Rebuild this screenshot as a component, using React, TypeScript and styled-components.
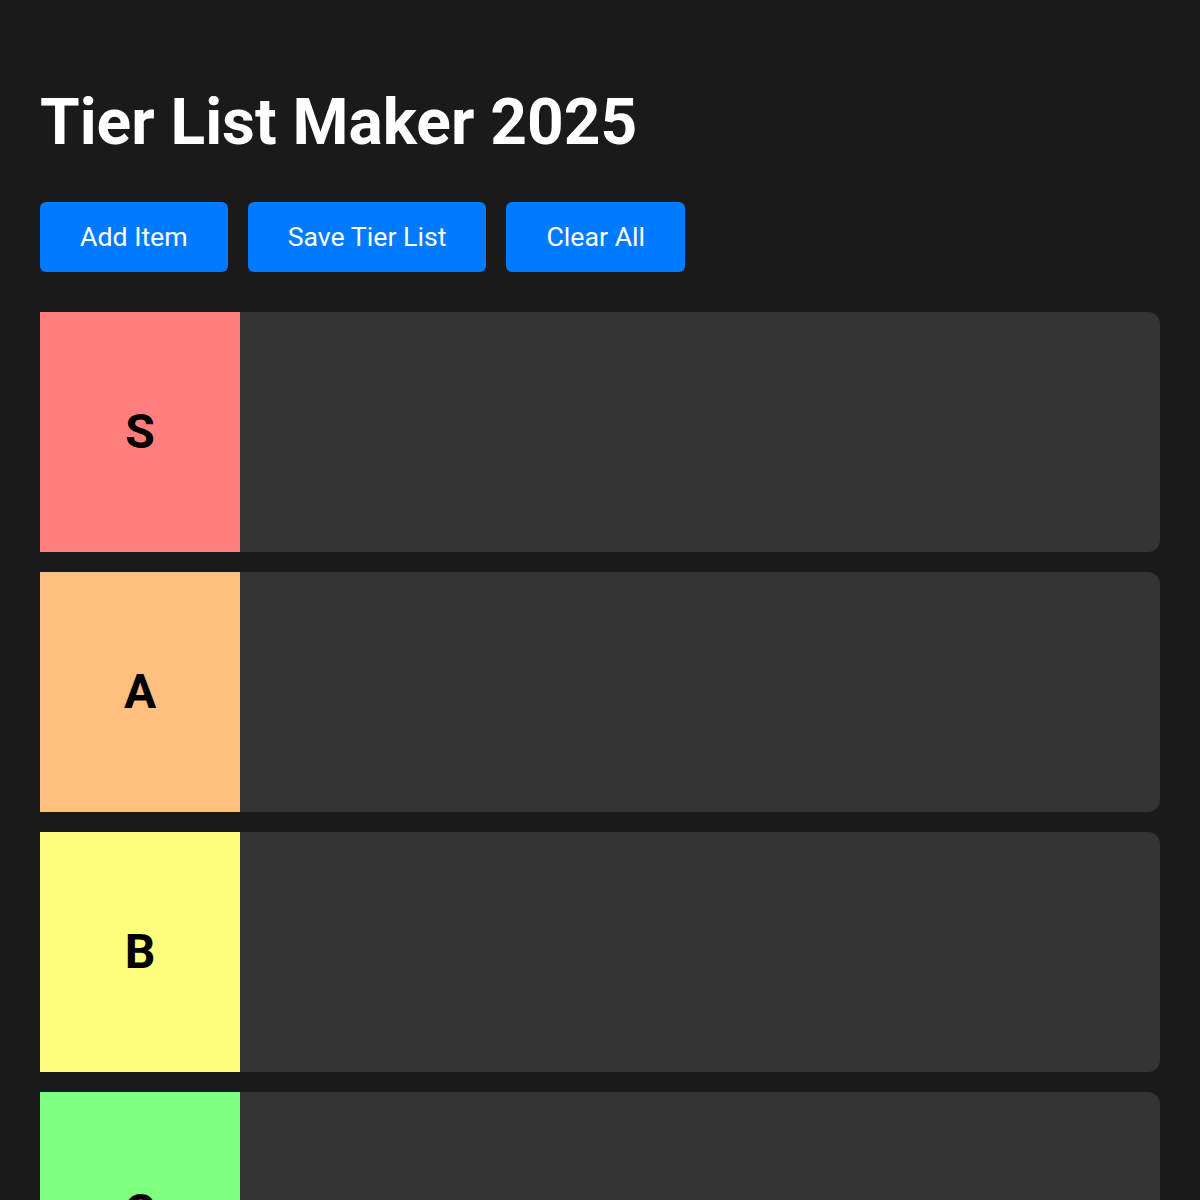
import React from "react";
import styled, { createGlobalStyle } from "styled-components";

const GlobalStyle = createGlobalStyle`
  body {
    margin: 0;
    background: #1a1a1a;
    font-family: Roboto, "Liberation Sans", sans-serif;
    color: #fff;
  }
`;

const tiers = [
  { name: "S", color: "#ff7f7f" },
  { name: "A", color: "#ffbf7f" },
  { name: "B", color: "#ffff7f" },
  { name: "C", color: "#7fff7f" },
  { name: "D", color: "#7fbfff" },
];

function App() {
  return (
    <>
      <GlobalStyle />
      <Page>
        <Title>Tier List Maker 2025</Title>
        <Toolbar>
          <Button>Add Item</Button>
          <Button>Save Tier List</Button>
          <Button>Clear All</Button>
        </Toolbar>
        <TierList>
          {tiers.map((t) => (
            <TierRow key={t.name}>
              <TierLabel $color={t.color}>{t.name}</TierLabel>
              <TierItems />
            </TierRow>
          ))}
        </TierList>
      </Page>
    </>
  );
}

export default App;

const Page = styled.div`
  padding: 40px;
`;

const Title = styled.h1`
  margin: 45px 0 40px;
  font-size: 64px;
  font-weight: 700;
  line-height: 1.2;
`;

const Toolbar = styled.div`
  display: flex;
  gap: 20px;
  margin-bottom: 40px;
`;

const Button = styled.button`
  background: #007bff;
  color: #fff;
  border: none;
  border-radius: 6px;
  padding: 20px 40px;
  font-family: inherit;
  font-size: 26.7px;
  line-height: 30px;
  cursor: pointer;
`;

const TierList = styled.div`
  display: flex;
  flex-direction: column;
  gap: 20px;
`;

const TierRow = styled.div`
  display: flex;
  height: 240px;
  background: #333;
  border-radius: 12px;
`;

const TierLabel = styled.div<{ $color: string }>`
  width: 200px;
  flex-shrink: 0;
  background: ${(p) => p.$color};
  color: #000;
  display: flex;
  align-items: center;
  justify-content: center;
  font-size: 48px;
  font-weight: 700;
`;

const TierItems = styled.div`
  flex: 1;
`;
